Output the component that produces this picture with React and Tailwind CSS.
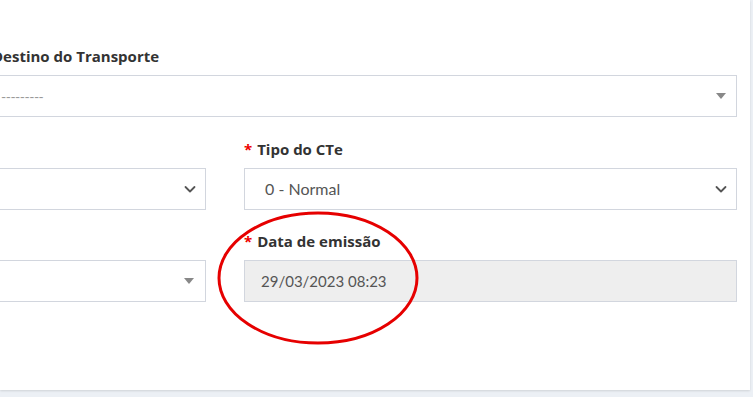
import React from 'react';

function Chevron() {
  return (
    <svg className="w-[12px] h-[12px] text-[#555]" viewBox="0 0 12 12" fill="none" stroke="currentColor">
      <path d="M1.5 4l4.5 4.5L10.5 4" strokeWidth={1.8} strokeLinecap="round" strokeLinejoin="round" />
    </svg>
  );
}

function Caret() {
  return <span className="block w-0 h-0 border-l-[5px] border-r-[5px] border-t-[6px] border-l-transparent border-r-transparent border-t-[#888]" />;
}

function Label({ children, required }) {
  return (
    <div className="h-[20px] leading-[20px] mb-[9px] text-[15px] font-bold text-[#333] whitespace-nowrap font-['Open_Sans',sans-serif]">
      {required && <span className="text-[#e00] mr-[5px]">*</span>}
      {children}
    </div>
  );
}

export default function App() {
  return (
    <div className="w-[753px] h-[397px] bg-[#ecf0f5] overflow-hidden font-['Lato',sans-serif]">
      <div className="relative w-[750px] h-[390px] bg-white shadow-[0_1px_2px_rgba(0,0,0,0.12)] overflow-hidden">
        <div className="-ml-[8px] pt-[46px] w-[745px]">
          {/* Destino */}
          <Label>Destino do Transporte</Label>
          <div className="h-[42px] border border-[#d2d6de] flex items-center justify-between pl-[8px] pr-[10px]">
            <span className="text-[14px] text-[#999] tracking-[-0.5px]">---------</span>
            <Caret />
          </div>

          {/* row 2 */}
          <div className="flex gap-[38px] mt-[22px]">
            <div className="w-[214px]">
              <div className="h-[20px] mb-[9px]" />
              <div className="h-[42px] border border-[#d2d6de] flex items-center justify-end pr-[9px]">
                <Chevron />
              </div>
            </div>
            <div className="w-[493px]">
              <Label required>Tipo do CTe</Label>
              <div className="h-[42px] border border-[#d2d6de] flex items-center justify-between pl-[20px] pr-[9px] text-[16px] text-[#555]">
                <span>0 - Normal</span>
                <Chevron />
              </div>
            </div>
          </div>

          {/* row 3 */}
          <div className="flex gap-[38px] mt-[21px]">
            <div className="w-[214px]">
              <div className="h-[20px] mb-[9px]" />
              <div className="h-[42px] border border-[#d2d6de] flex items-center justify-end pr-[11px]">
                <Caret />
              </div>
            </div>
            <div className="w-[493px]">
              <Label required>Data de emissão</Label>
              <div className="h-[42px] border border-[#d2d6de] bg-[#eeeeee] flex items-center pl-[16px] text-[15px] text-[#555]">
                29/03/2023 08:23
              </div>
            </div>
          </div>
        </div>

        {/* annotation ellipse */}
        <svg className="absolute left-[216px] top-[210px] w-[204px] h-[136px] pointer-events-none" viewBox="0 0 204 136" fill="none">
          <ellipse cx="102" cy="68" rx="99" ry="65" stroke="#e60000" strokeWidth="3" />
        </svg>
      </div>
    </div>
  );
}
